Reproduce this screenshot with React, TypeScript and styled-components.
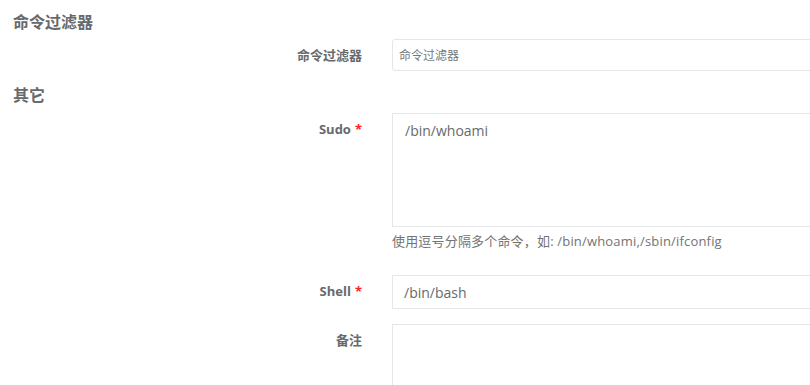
import React from "react";
import styled, { createGlobalStyle } from "styled-components";

const GlobalStyle = createGlobalStyle`
  html, body {
    margin: 0;
    background: #ffffff;
    overflow: hidden;
  }
  body {
    font-family: "Open Sans", "Noto Sans CJK SC", sans-serif;
    font-size: 13px;
    color: #676a6c;
  }
`;

type FieldProps = {
  label: string;
  required?: boolean;
  help?: string;
  gap?: number;
  children: React.ReactNode;
};

const Field: React.FC<FieldProps> = ({ label, required, help, gap = 0, children }) => (
  <FormRow $gap={gap}>
    <Label>
      {label}
      {required && <Required>*</Required>}
    </Label>
    <Control>
      {children}
      {help && <HelpText>{help}</HelpText>}
    </Control>
  </FormRow>
);

const App: React.FC = () => {
  return (
    <Page>
      <GlobalStyle />
      <SectionTitle $gap={12}>命令过滤器</SectionTitle>
      <Field label="命令过滤器" gap={9}>
        <SmallInput defaultValue="命令过滤器" />
      </Field>

      <SectionTitle $gap={14}>其它</SectionTitle>
      <Field label="Sudo" required gap={10} help="使用逗号分隔多个命令，如: /bin/whoami,/sbin/ifconfig">
        <TextArea $height={114} defaultValue="/bin/whoami" />
      </Field>
      <Field label="Shell" required gap={25}>
        <TextInput defaultValue="/bin/bash" />
      </Field>
      <Field label="备注" gap={15}>
        <TextArea $height={80} defaultValue="" />
      </Field>
    </Page>
  );
};

const Page = styled.div`
  width: 810px;
  height: 385px;
  overflow: hidden;
  display: flex;
  flex-direction: column;
`;

const SectionTitle = styled.h4<{ $gap: number }>`
  margin: ${({ $gap }) => $gap}px 0 0;
  padding-left: 13px;
  font-size: 16px;
  line-height: 18px;
  font-weight: 600;
  color: #676a6c;
  font-family: "Noto Sans CJK SC", sans-serif;
`;

const FormRow = styled.div<{ $gap: number }>`
  display: grid;
  grid-template-columns: 362px 500px;
  column-gap: 30px;
  margin-top: ${({ $gap }) => $gap}px;
  flex-shrink: 0;
`;

const Label = styled.label`
  padding-top: 7px;
  line-height: 18px;
  text-align: right;
  font-weight: 700;
  font-size: 13px;
  font-family: "Open Sans", "Noto Sans CJK SC", sans-serif;
  color: #676a6c;
`;

const Required = styled.span`
  color: #ff2020;
  margin-left: 4px;
  font-weight: 700;
`;

const Control = styled.div`
  display: flex;
  flex-direction: column;
`;

const baseField = `
  box-sizing: border-box;
  width: 100%;
  border: 1px solid #e5e6e7;
  background: #ffffff;
  color: #676a6c;
  outline: none;
  font-family: "Open Sans", "Noto Sans CJK SC", sans-serif;
`;

const SmallInput = styled.input`
  ${baseField}
  height: 32px;
  border-radius: 3px;
  padding: 0 6px;
  font-size: 12px;
  color: #777;
`;

const TextInput = styled.input`
  ${baseField}
  height: 34px;
  border-radius: 0;
  padding: 0 11px;
  font-size: 14px;
`;

const TextArea = styled.textarea<{ $height: number }>`
  ${baseField}
  height: ${({ $height }) => $height}px;
  border-radius: 0;
  padding: 7px 12px;
  font-size: 14px;
  line-height: 20px;
  resize: none;
`;

const HelpText = styled.span`
  margin-top: 5px;
  line-height: 18px;
  font-size: 13px;
  letter-spacing: 0.18px;
  color: #737373;
`;

export default App;
